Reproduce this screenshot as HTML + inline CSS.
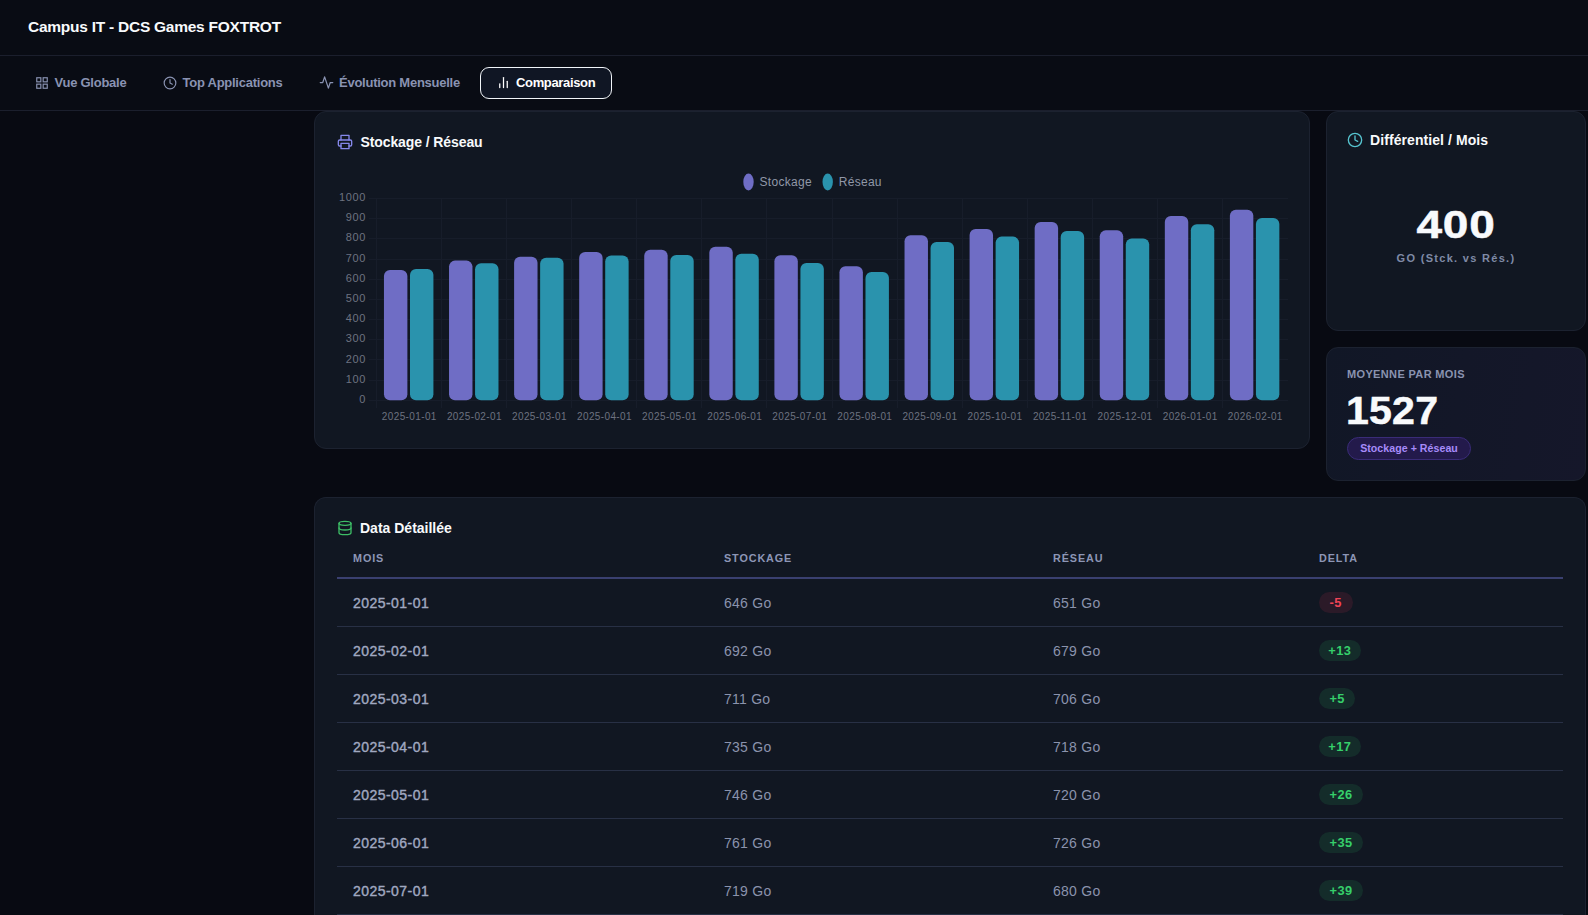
<!DOCTYPE html>
<html lang="fr">
<head>
<meta charset="utf-8">
<title>Campus IT - DCS Games FOXTROT</title>
<style>
*{box-sizing:border-box}
html,body{margin:0;padding:0;overflow:hidden}
body{width:1588px;height:915px;overflow:hidden;background:#080a12;color:#fff;font-family:"Liberation Sans",sans-serif;position:relative}
.hdr{position:absolute;left:0;top:0;width:1588px;height:56px;background:#090c14;border-bottom:1px solid #1b1f2d}
.hdr h1{position:absolute;left:28px;top:17px;margin:0;font-size:15.5px;line-height:20px;font-weight:700;color:#f8fafc;letter-spacing:-0.25px;white-space:nowrap}
.nav{position:absolute;left:0;top:56px;width:1588px;height:55px;background:#090c14;border-bottom:1px solid #1b1f2d}
.tab{position:absolute;top:10px;height:32px;display:flex;align-items:center;font-size:13px;font-weight:700;color:#8a93b2;white-space:nowrap;letter-spacing:-0.25px}
.tab .ic{margin-right:5.5px;flex:none;position:relative;top:0.5px}
.tab.on{top:11px;color:#fff;border:1.5px solid #f1f5f9;border-radius:9px;background:#101624;padding:0 0 2px 15px;width:131.5px}
.tab.on .ic{margin-right:5px}
.tab.on span{letter-spacing:-0.35px}
.card{position:absolute;background:#111722;border:1px solid #1c2230;border-radius:12px}
.ct{position:absolute;display:flex;align-items:center;font-size:14px;font-weight:700;color:#f8fafc;white-space:nowrap}
.ct .ic{margin-right:7px}
.chart{position:absolute;left:15px;top:53px}
.chart text{font-family:"Liberation Sans",sans-serif}
.yt text{font-size:11px;fill:#6d7280;letter-spacing:0.7px}
.xt text{font-size:10px;fill:#6d7280;letter-spacing:0.38px}
.lg text{font-size:12px;fill:#9097a8;letter-spacing:0.3px}
.big{font-weight:700;color:#f8fafc;white-space:nowrap}
.sub{font-size:11px;font-weight:700;color:#7f8aa6;letter-spacing:1.3px;white-space:nowrap}
.badge{position:absolute;left:20px;top:89px;height:23px;width:124px;text-align:center;border-radius:12px;background:#231a4b;border:1px solid #3a2c78;color:#a78bfa;font-size:10.6px;font-weight:700;line-height:21px;white-space:nowrap;letter-spacing:0.05px}
table{position:absolute;left:22px;top:41px;width:1226px;border-collapse:collapse;table-layout:fixed}
th{height:39px;padding:0 0 0 16px;text-align:left;font-size:10.8px;font-weight:700;letter-spacing:0.9px;color:#8d96b6;border-bottom:2px solid #3a4070}
td{height:48px;padding:2px 0 0 16px;font-size:14px;color:#8b93ad;border-bottom:1px solid #283045;letter-spacing:0.25px}
td.m{font-weight:400;color:#a0a8c0;letter-spacing:0.45px;-webkit-text-stroke:0.4px #a0a8c0}
.pill{display:inline-block;height:21px;line-height:21px;text-align:center;border-radius:11px;font-size:12.8px;font-weight:700;letter-spacing:0.45px;vertical-align:middle;position:relative;top:-1px}
.pos{background:#142c2a;color:#36cf6a}
.neg{background:#2b1a28;color:#f04456}
</style>
</head>
<body>
<div class="hdr"><h1>Campus IT - DCS Games FOXTROT</h1></div>
<div class="nav">
  <div class="tab" style="left:35px"><svg class="ic" width="14" height="14" viewBox="0 0 24 24" fill="none" stroke="#8a93b2" stroke-width="2" stroke-linecap="round" stroke-linejoin="round" style="stroke-linejoin:miter"><rect x="3" y="3" width="7" height="7"/><rect x="14" y="3" width="7" height="7"/><rect x="14" y="14" width="7" height="7"/><rect x="3" y="14" width="7" height="7"/></svg><span>Vue Globale</span></div>
  <div class="tab" style="left:163px"><svg class="ic" width="14" height="14" viewBox="0 0 24 24" fill="none" stroke="#8a93b2" stroke-width="2" stroke-linecap="round" stroke-linejoin="round" ><circle cx="12" cy="12" r="10"/><polyline points="12 6 12 12 16 14"/></svg><span>Top Applications</span></div>
  <div class="tab" style="left:319px"><svg class="ic" width="15" height="15" viewBox="0 0 24 24" fill="none" stroke="#8a93b2" stroke-width="2" stroke-linecap="round" stroke-linejoin="round" style="margin-right:5px"><path d="M22 12h-4l-3 9L9 3l-3 9H2"/></svg><span>Évolution Mensuelle</span></div>
  <div class="tab on" style="left:480px"><svg class="ic" width="15" height="15" viewBox="0 0 24 24" fill="none" stroke="#ffffff" stroke-width="2" stroke-linecap="round" stroke-linejoin="round" ><line x1="18" x2="18" y1="20" y2="10"/><line x1="12" x2="12" y1="20" y2="4"/><line x1="6" x2="6" y1="20" y2="14"/></svg><span>Comparaison</span></div>
</div>

<div class="card" style="left:314px;top:111px;width:996px;height:338px">
  <div class="ct" style="left:22px;top:21px;height:18px;letter-spacing:-0.1px"><svg class="ic" width="16" height="16" viewBox="0 0 24 24" fill="none" stroke="#8587ea" stroke-width="2" stroke-linecap="round" stroke-linejoin="round" ><polyline points="6 9 6 2 18 2 18 9"/><path d="M6 18H4a2 2 0 0 1-2-2v-5a2 2 0 0 1 2-2h16a2 2 0 0 1 2 2v5a2 2 0 0 1-2 2h-2"/><rect x="6" y="14" width="12" height="8"/></svg><span style="margin-left:0.5px">Stockage / Réseau</span></div>
  <svg class="chart" width="970" height="270" viewBox="330 165 970 270">
<g stroke="#171d2a" stroke-width="1" shape-rendering="crispEdges">
<line x1="368.5" y1="400.2" x2="1287.5" y2="400.2"/>
<line x1="368.5" y1="380.0" x2="1287.5" y2="380.0"/>
<line x1="368.5" y1="359.9" x2="1287.5" y2="359.9"/>
<line x1="368.5" y1="339.7" x2="1287.5" y2="339.7"/>
<line x1="368.5" y1="319.5" x2="1287.5" y2="319.5"/>
<line x1="368.5" y1="299.4" x2="1287.5" y2="299.4"/>
<line x1="368.5" y1="279.2" x2="1287.5" y2="279.2"/>
<line x1="368.5" y1="259.0" x2="1287.5" y2="259.0"/>
<line x1="368.5" y1="238.8" x2="1287.5" y2="238.8"/>
<line x1="368.5" y1="218.7" x2="1287.5" y2="218.7"/>
<line x1="368.5" y1="198.5" x2="1287.5" y2="198.5"/>
<line x1="376.5" y1="198.5" x2="376.5" y2="408.2"/>
<line x1="441.6" y1="198.5" x2="441.6" y2="408.2"/>
<line x1="506.6" y1="198.5" x2="506.6" y2="408.2"/>
<line x1="571.7" y1="198.5" x2="571.7" y2="408.2"/>
<line x1="636.8" y1="198.5" x2="636.8" y2="408.2"/>
<line x1="701.9" y1="198.5" x2="701.9" y2="408.2"/>
<line x1="766.9" y1="198.5" x2="766.9" y2="408.2"/>
<line x1="832.0" y1="198.5" x2="832.0" y2="408.2"/>
<line x1="897.1" y1="198.5" x2="897.1" y2="408.2"/>
<line x1="962.1" y1="198.5" x2="962.1" y2="408.2"/>
<line x1="1027.2" y1="198.5" x2="1027.2" y2="408.2"/>
<line x1="1092.3" y1="198.5" x2="1092.3" y2="408.2"/>
<line x1="1157.4" y1="198.5" x2="1157.4" y2="408.2"/>
<line x1="1222.4" y1="198.5" x2="1222.4" y2="408.2"/>
</g>
<g class="yt" text-anchor="end">
<text x="366.2" y="402.8">0</text>
<text x="366.2" y="382.6">100</text>
<text x="366.2" y="362.5">200</text>
<text x="366.2" y="342.3">300</text>
<text x="366.2" y="322.1">400</text>
<text x="366.2" y="302.0">500</text>
<text x="366.2" y="281.8">600</text>
<text x="366.2" y="261.6">700</text>
<text x="366.2" y="241.4">800</text>
<text x="366.2" y="221.3">900</text>
<text x="366.2" y="201.1">1000</text>
</g>
<rect x="383.96" y="269.90" width="23.43" height="130.30" rx="6" fill="#6f6dc5"/>
<rect x="409.99" y="268.89" width="23.43" height="131.31" rx="6" fill="#2a93ad"/>
<rect x="449.03" y="260.62" width="23.43" height="139.58" rx="6" fill="#6f6dc5"/>
<rect x="475.06" y="263.25" width="23.43" height="136.95" rx="6" fill="#2a93ad"/>
<rect x="514.10" y="256.79" width="23.43" height="143.41" rx="6" fill="#6f6dc5"/>
<rect x="540.13" y="257.80" width="23.43" height="142.40" rx="6" fill="#2a93ad"/>
<rect x="579.17" y="251.95" width="23.43" height="148.25" rx="6" fill="#6f6dc5"/>
<rect x="605.20" y="255.38" width="23.43" height="144.82" rx="6" fill="#2a93ad"/>
<rect x="644.24" y="249.73" width="23.43" height="150.47" rx="6" fill="#6f6dc5"/>
<rect x="670.27" y="254.98" width="23.43" height="145.22" rx="6" fill="#2a93ad"/>
<rect x="709.32" y="246.71" width="23.43" height="153.49" rx="6" fill="#6f6dc5"/>
<rect x="735.34" y="253.77" width="23.43" height="146.43" rx="6" fill="#2a93ad"/>
<rect x="774.39" y="255.18" width="23.43" height="145.02" rx="6" fill="#6f6dc5"/>
<rect x="800.42" y="263.04" width="23.43" height="137.16" rx="6" fill="#2a93ad"/>
<rect x="839.46" y="266.27" width="23.43" height="133.93" rx="6" fill="#6f6dc5"/>
<rect x="865.49" y="271.92" width="23.43" height="128.28" rx="6" fill="#2a93ad"/>
<rect x="904.53" y="235.21" width="23.43" height="164.99" rx="6" fill="#6f6dc5"/>
<rect x="930.56" y="242.07" width="23.43" height="158.13" rx="6" fill="#2a93ad"/>
<rect x="969.60" y="228.96" width="23.43" height="171.24" rx="6" fill="#6f6dc5"/>
<rect x="995.63" y="236.62" width="23.43" height="163.58" rx="6" fill="#2a93ad"/>
<rect x="1034.67" y="222.10" width="23.43" height="178.10" rx="6" fill="#6f6dc5"/>
<rect x="1060.70" y="230.97" width="23.43" height="169.23" rx="6" fill="#2a93ad"/>
<rect x="1099.74" y="230.37" width="23.43" height="169.83" rx="6" fill="#6f6dc5"/>
<rect x="1125.77" y="238.44" width="23.43" height="161.76" rx="6" fill="#2a93ad"/>
<rect x="1164.82" y="216.05" width="23.43" height="184.15" rx="6" fill="#6f6dc5"/>
<rect x="1190.84" y="224.32" width="23.43" height="175.88" rx="6" fill="#2a93ad"/>
<rect x="1229.89" y="209.80" width="23.43" height="190.40" rx="6" fill="#6f6dc5"/>
<rect x="1255.92" y="218.06" width="23.43" height="182.14" rx="6" fill="#2a93ad"/>
<g class="xt" text-anchor="middle">
<text x="409.3" y="420.1">2025-01-01</text>
<text x="474.4" y="420.1">2025-02-01</text>
<text x="539.5" y="420.1">2025-03-01</text>
<text x="604.5" y="420.1">2025-04-01</text>
<text x="669.6" y="420.1">2025-05-01</text>
<text x="734.7" y="420.1">2025-06-01</text>
<text x="799.8" y="420.1">2025-07-01</text>
<text x="864.8" y="420.1">2025-08-01</text>
<text x="929.9" y="420.1">2025-09-01</text>
<text x="995.0" y="420.1">2025-10-01</text>
<text x="1060.0" y="420.1">2025-11-01</text>
<text x="1125.1" y="420.1">2025-12-01</text>
<text x="1190.2" y="420.1">2026-01-01</text>
<text x="1255.3" y="420.1">2026-02-01</text>
</g>
<ellipse cx="748.5" cy="182" rx="5.2" ry="8.4" fill="#6f6dc5"/>
<ellipse cx="827.7" cy="182" rx="5.2" ry="8.4" fill="#2a93ad"/>
<g class="lg"><text x="759.5" y="186.3">Stockage</text><text x="838.7" y="186.3">Réseau</text></g>
</svg>
</div>

<div class="card" style="left:1326px;top:111px;width:260px;height:220px">
  <div class="ct" style="left:20px;top:19px;height:18px;letter-spacing:0.08px"><svg class="ic" width="16" height="16" viewBox="0 0 24 24" fill="none" stroke="#56c4cf" stroke-width="2" stroke-linecap="round" stroke-linejoin="round" ><circle cx="12" cy="12" r="10"/><polyline points="12 6 12 12 16 14"/></svg><span>Différentiel / Mois</span></div>
  <div class="big" style="position:absolute;left:0;width:258px;top:90px;text-align:center;font-size:39.5px;line-height:44px;letter-spacing:0.6px;-webkit-text-stroke:0.5px #f8fafc;transform:scaleX(1.165)">400</div>
  <div class="sub" style="position:absolute;left:0;width:258px;top:139px;text-align:center;line-height:14px">GO (Stck. vs Rés.)</div>
</div>

<div class="card" style="left:1326px;top:347px;width:260px;height:134px;background:linear-gradient(100deg,#111726 0%,#15172a 100%)">
  <div class="sub" style="position:absolute;left:20px;top:19px;line-height:14px;letter-spacing:0.35px;color:#8a93b0">MOYENNE PAR MOIS</div>
  <div class="big" style="position:absolute;left:19px;top:40px;font-size:39.5px;line-height:44px;letter-spacing:0.2px;-webkit-text-stroke:0.5px #f8fafc;transform:scaleX(1.04);transform-origin:0 0">1527</div>
  <div class="badge">Stockage + Réseau</div>
</div>

<div class="card" style="left:314px;top:497px;width:1272px;height:418px;border-bottom:0;border-bottom-left-radius:0;border-bottom-right-radius:0;overflow:hidden">
  <div class="ct" style="left:22px;top:21px;height:18px"><svg class="ic" width="16" height="16" viewBox="0 0 24 24" fill="none" stroke="#3dbd66" stroke-width="2" stroke-linecap="round" stroke-linejoin="round" ><ellipse cx="12" cy="5" rx="9" ry="3"/><path d="M3 5V19A9 3 0 0 0 21 19V5"/><path d="M3 12A9 3 0 0 0 21 12"/></svg><span>Data Détaillée</span></div>
  <table>
    <colgroup><col style="width:371px"><col style="width:329px"><col style="width:266px"><col style="width:260px"></colgroup>
    <thead><tr><th>MOIS</th><th>STOCKAGE</th><th>RÉSEAU</th><th>DELTA</th></tr></thead>
    <tbody>
<tr><td class="m">2025-01-01</td><td>646 Go</td><td>651 Go</td><td><span class="pill neg" style="width:33.5px">-5</span></td></tr>
<tr><td class="m">2025-02-01</td><td>692 Go</td><td>679 Go</td><td><span class="pill pos" style="width:41.8px">+13</span></td></tr>
<tr><td class="m">2025-03-01</td><td>711 Go</td><td>706 Go</td><td><span class="pill pos" style="width:36.3px">+5</span></td></tr>
<tr><td class="m">2025-04-01</td><td>735 Go</td><td>718 Go</td><td><span class="pill pos" style="width:41.8px">+17</span></td></tr>
<tr><td class="m">2025-05-01</td><td>746 Go</td><td>720 Go</td><td><span class="pill pos" style="width:44.2px">+26</span></td></tr>
<tr><td class="m">2025-06-01</td><td>761 Go</td><td>726 Go</td><td><span class="pill pos" style="width:44.2px">+35</span></td></tr>
<tr><td class="m">2025-07-01</td><td>719 Go</td><td>680 Go</td><td><span class="pill pos" style="width:44.2px">+39</span></td></tr>
    </tbody>
  </table>
</div>
</body>
</html>
